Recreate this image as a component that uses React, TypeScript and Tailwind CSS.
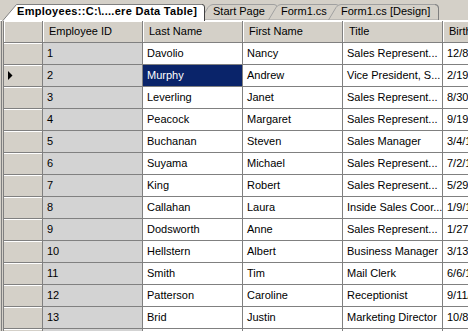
const columns = ['Employee ID', 'Last Name', 'First Name', 'Title', 'Birth Date'];

const rows = [
  ['1', 'Davolio', 'Nancy', 'Sales Represent...', '12/8/1948'],
  ['2', 'Murphy', 'Andrew', 'Vice President, S...', '2/19/1952'],
  ['3', 'Leverling', 'Janet', 'Sales Represent...', '8/30/1963'],
  ['4', 'Peacock', 'Margaret', 'Sales Represent...', '9/19/1937'],
  ['5', 'Buchanan', 'Steven', 'Sales Manager', '3/4/1955'],
  ['6', 'Suyama', 'Michael', 'Sales Represent...', '7/2/1963'],
  ['7', 'King', 'Robert', 'Sales Represent...', '5/29/1960'],
  ['8', 'Callahan', 'Laura', 'Inside Sales Coor...', '1/9/1958'],
  ['9', 'Dodsworth', 'Anne', 'Sales Represent...', '1/27/1966'],
  ['10', 'Hellstern', 'Albert', 'Business Manager', '3/13/1960'],
  ['11', 'Smith', 'Tim', 'Mail Clerk', '6/6/1973'],
  ['12', 'Patterson', 'Caroline', 'Receptionist', '9/11/1972'],
  ['13', 'Brid', 'Justin', 'Marketing Director', '10/8/1962'],
  ['14', 'Martin', 'Xavier', 'French Sales Rep...', '11/30/1960'],
];

const ActiveTab = ({ label }: { label: string }) => {
  return (
    <div className="relative z-20 h-[21px] w-[203px] shrink-0 pl-[15px] pt-[4px]">
      <svg className="absolute inset-0" width="203" height="21">
        <path d="M0.5,21 L14.5,4.5 L200,4.5 Q202.5,4.5 202.5,7 L202.5,21 Z" fill="#ffffff" />
        <path d="M0.5,21 L14.5,4.5 L200,4.5" fill="none" stroke="#808080" />
        <path d="M200,4.5 Q202.5,4.5 202.5,7 L202.5,21" fill="none" stroke="#404040" />
      </svg>
      <span className="relative block whitespace-nowrap text-[11px] font-bold leading-[15px] tracking-[0.3px] text-black">
        {label}
      </span>
    </div>
  );
};

const App = () => {
  return (
    <div className="h-[331px] w-[468px] overflow-hidden bg-[#d4d0c8] font-['Liberation_Sans',Arial,sans-serif] text-[11px] text-black">
      {/* tab strip */}
      <div className="flex h-[21px] border-b border-white pl-[2px]">
        <ActiveTab label="Employees::C:\....ere Data Table]" />
        <div className="relative z-[1] ml-[-5px] flex h-[20px] w-[78px] shrink-0 pl-[13px] pt-[4px]">
          <svg className="absolute inset-0" width="78" height="20">
            <path d="M0.5,20 L8,7.5 Q10,4.5 13,4.5 L74,4.5 Q77,4.5 77,7.5 L77,20 Z" fill="#d4d0c8" stroke="#a0a0a0" />
          </svg>
          <span className="relative whitespace-nowrap leading-[15px]">Start Page</span>
        </div>
        <div className="relative z-[2] ml-[-10px] flex h-[20px] w-[72px] shrink-0 pl-[13px] pt-[4px]">
          <svg className="absolute inset-0" width="72" height="20">
            <path d="M0.5,20 L8,7.5 Q10,4.5 13,4.5 L68,4.5 Q71,4.5 71,7.5 L71,20 Z" fill="#d4d0c8" stroke="#a0a0a0" />
          </svg>
          <span className="relative whitespace-nowrap leading-[15px]">Form1.cs</span>
        </div>
        <div className="relative z-[3] ml-[-12px] flex h-[20px] w-[112px] shrink-0 pl-[13px] pt-[4px]">
          <svg className="absolute inset-0" width="112" height="20">
            <path d="M0.5,20 L8,7.5 Q10,4.5 13,4.5 L107,4.5 Q110.5,4.5 110.5,8 L110.5,20 Z" fill="#d4d0c8" stroke="#a0a0a0" />
            <path d="M107,4.5 Q110.5,4.5 110.5,8 L110.5,20" fill="none" stroke="#808080" />
          </svg>
          <span className="relative whitespace-nowrap leading-[15px]">Form1.cs [Design]</span>
        </div>
      </div>

      {/* grid */}
      <div className="ml-[1px] border-l border-[#808080] pl-[1px]">
        <div className="flex h-[22px] border-b border-[#808080]">
          <div className="h-full w-[40px] shrink-0 border-x border-[#808080] bg-[#d4d0c8] shadow-[inset_1px_1px_0_#ffffff]" />
          {columns.map((c, i) => (
            <div
              key={c}
              className={`flex h-full shrink-0 items-center overflow-hidden whitespace-nowrap bg-[#d4d0c8] pl-[6px] shadow-[inset_1px_1px_0_#ffffff] ${
                i < 4 ? 'w-[100px] border-r border-[#808080]' : 'w-[40px]'
              }`}
            >
              {c}
            </div>
          ))}
        </div>
        {rows.map((r, ri) => (
          <div key={r[0]} className="flex h-[22px] border-b border-[#808080]">
            <div className="flex h-full w-[40px] shrink-0 items-center border-x border-[#808080] bg-[#d4d0c8] pl-[4px] shadow-[inset_0_1px_0_#ffffff]">
              {ri === 1 && (
                <svg width="5" height="9" viewBox="0 0 5 9">
                  <path d="M0,0 L4.5,4.5 L0,9 Z" fill="#000000" />
                </svg>
              )}
            </div>
            {r.map((v, ci) => {
              const selected = ri === 1 && ci === 1;
              let cls = 'bg-white';
              if (ci === 0) cls = 'bg-[#d3d3d3]';
              if (selected) cls = 'bg-[#0a246a] text-white';
              return (
                <div
                  key={ci}
                  className={`flex h-full shrink-0 items-center overflow-hidden whitespace-nowrap pl-[4px] ${cls} ${
                    ci < 4 ? 'w-[100px] border-r border-[#808080]' : 'w-[40px]'
                  }`}
                >
                  {v}
                </div>
              );
            })}
          </div>
        ))}
      </div>
    </div>
  );
};

export default App;
